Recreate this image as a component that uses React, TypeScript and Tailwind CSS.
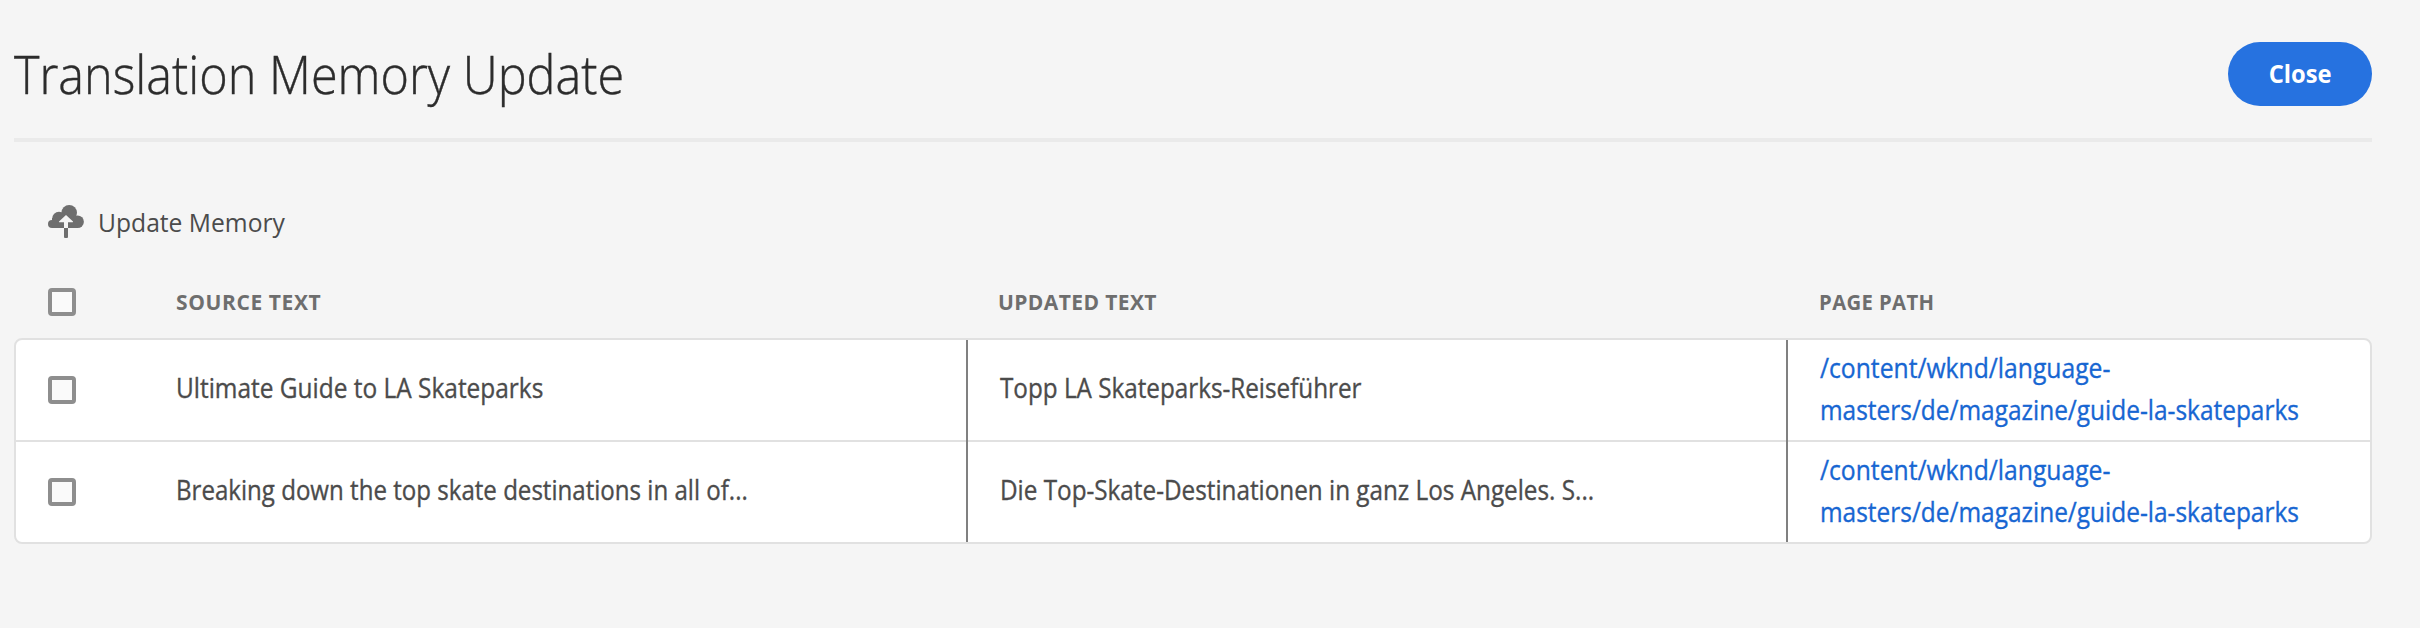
const rows = [
  {
    source: "Ultimate Guide to LA Skateparks",
    sourceScale: "scale-x-[0.905]",
    updated: "Topp LA Skateparks-Reiseführer",
    updatedScale: "scale-x-[0.898]",
  },
  {
    source: "Breaking down the top skate destinations in all of...",
    sourceScale: "scale-x-[0.892]",
    updated: "Die Top-Skate-Destinationen in ganz Los Angeles. S...",
    updatedScale: "scale-x-[0.899]",
  },
];

function Checkbox() {
  return (
    <span
      role="checkbox"
      aria-checked="false"
      className="block size-7 shrink-0 rounded-[4px] border-4 border-[#8e8e8e] bg-[#fafafa]"
    />
  );
}

function CloudUploadIcon() {
  return (
    <svg width="36" height="33" viewBox="0 0 36 33" className="shrink-0" aria-hidden="true">
      <g fill="#6e6e6e">
        <circle cx="21.2" cy="7.8" r="7.8" />
        <circle cx="11" cy="13.5" r="6.8" />
        <circle cx="4" cy="19" r="4" />
        <circle cx="29.6" cy="16.7" r="6.3" />
        <rect x="4" y="13" width="26" height="10" />
        <path d="M16 23h4v9a1 1 0 0 1-1 1h-2a1 1 0 0 1-1-1Z" />
      </g>
      <path fill="#f5f5f5" d="M18 10l7 6.500q.3.700-.4.800H20V23h-4v-5.700h-4.600q-.7-.1-.4-.8Z" />
    </svg>
  );
}

export default function App() {
  return (
    <div className="h-[628px] overflow-hidden bg-[#f5f5f5] pr-12 pl-3.5 font-['Open_Sans','Noto_Sans',sans-serif] text-[27px] text-[#4b4b4b]">
      <header className="flex h-[142px] items-start justify-between border-b-4 border-[#eaeaea]">
        <h1 className="mt-[38px] origin-left scale-x-[0.916] text-[53px] leading-[72px] font-light whitespace-nowrap text-[#2c2c2c] [-webkit-text-stroke:0.4px_#2c2c2c]">
          Translation Memory Update
        </h1>
        <button className="mt-[42px] flex h-16 w-36 items-center justify-center rounded-full bg-[#2672e0] pb-[3px] text-[25px] leading-8 font-bold text-white">
          <span className="scale-x-[0.95]">Close</span>
        </button>
      </header>

      <div className="mt-[63px] ml-[34px] flex h-[35px] items-start">
        <CloudUploadIcon />
        <span className="-mt-px ml-3.5 origin-left scale-x-[0.948] text-[26px] leading-9 whitespace-nowrap">
          Update Memory
        </span>
      </div>

      <div className="mt-12 grid h-[50px] grid-cols-[162px_822px_822px_1fr] items-start text-[21px] leading-7 font-bold text-[#6e6e6e]">
        <div className="pl-[34px]">
          <Checkbox />
        </div>
        <div className="tracking-[0.6px]">SOURCE TEXT</div>
        <div className="tracking-[0.4px]">UPDATED TEXT</div>
        <div className="origin-left scale-x-[0.965] tracking-[0.4px]">
          <span className="-ml-px">PAGE PATH</span>
        </div>
      </div>

      <div className="overflow-hidden rounded-lg border-2 border-[#e1e1e1] bg-white [-webkit-text-stroke:0.35px_currentColor]">
        {rows.map((row) => (
          <div
            key={row.source}
            className="grid h-[102px] grid-cols-[160px_790px_820px_1fr] border-b-2 border-[#e1e1e1] last:h-[100px] last:border-b-0"
          >
            <div className="flex items-center pl-8">
              <Checkbox />
            </div>
            <div className="flex items-center pb-[3px]">
              <span className={`origin-left whitespace-nowrap ${row.sourceScale}`}>{row.source}</span>
            </div>
            <div className="-mb-0.5 flex items-center border-l-2 border-[#808080] pb-[5px] pl-8">
              <span className={`origin-left whitespace-nowrap ${row.updatedScale}`}>{row.updated}</span>
            </div>
            <div className="-mb-0.5 border-l-2 border-[#808080] pt-[7px] pl-8 leading-[42px] text-[#1766d2]">
              <a>
                <span className="block w-fit origin-left scale-x-[0.914]">/content/wknd/language-</span>
                <span className="block w-fit origin-left scale-x-[0.905]">masters/de/magazine/guide-la-skateparks</span>
              </a>
            </div>
          </div>
        ))}
      </div>
    </div>
  );
}
